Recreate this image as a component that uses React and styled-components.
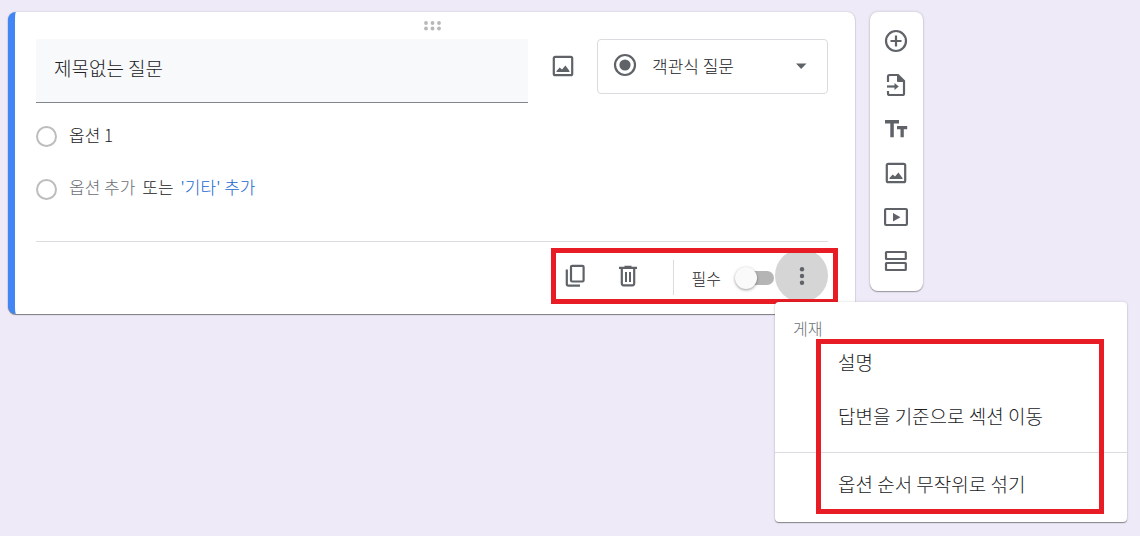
import React from 'react';
import styled, { createGlobalStyle } from 'styled-components';

const GlobalStyle = createGlobalStyle`
  * {
    box-sizing: border-box;
  }

  body {
    margin: 0;
    background: #eeeaf7;
    color: #202124;
    font-family: 'Noto Sans CJK KR', sans-serif;
    font-size: 16px;
    font-weight: 300;
  }

  button, input, select {
    font: inherit;
    color: inherit;
  }
`;

const Page = styled.main`
  display: flex;
  align-items: flex-start;
  gap: 15px;
  min-height: 100vh;
  padding: 12px 217px 12px 8px;
`;

const Card = styled.section`
  flex: 1;
  min-width: 0;
  padding: 0 27px 12px 21px;
  background: #fff;
  border-left: 7px solid #4285f4;
  border-radius: 8px;
  box-shadow: 0 1px 1px rgba(0, 0, 0, 0.45), 0 0 2px rgba(0, 0, 0, 0.2);
`;

const IconButton = styled.button`
  display: flex;
  align-items: center;
  justify-content: center;
  width: ${({ $width }) => $width || 53}px;
  height: ${({ $height }) => $height || 53}px;
  padding: 0;
  border: 0;
  border-radius: 50%;
  background: ${({ $active }) => ($active ? '#d5d5d5' : 'transparent')};
  color: #5f6368;
  cursor: pointer;
`;

const DragHandle = styled(IconButton)`
  margin: 0 auto;
  border-radius: 0;
  color: #b8b8b8;
  cursor: move;
`;

const QuestionRow = styled.div`
  display: flex;
  align-items: flex-start;
  gap: 8px;
`;

const TitleInput = styled.input`
  flex: 1;
  min-width: 0;
  height: 64px;
  padding: 0 18px 6px;
  border: 0;
  border-bottom: 1px solid #80868b;
  background: #f8f9fa;
  font-size: 19px;
  outline: none;
`;

const TypeField = styled.label`
  display: flex;
  align-items: center;
  width: 231px;
  height: 55px;
  padding: 0 14px 3px 15px;
  border: 1px solid #dadce0;
  border-radius: 4px;
  color: #5f6368;
`;

const TypeSelect = styled.select`
  flex: 1;
  min-width: 0;
  height: 50px;
  padding: 0 0 0 15px;
  border: 0;
  appearance: none;
  background: transparent;
  color: #202124;
  font-size: 17px;
  outline: none;
`;

const Options = styled.div`
  padding: 7px 0 25px;
  border-bottom: 1px solid #dadce0;
`;

const OptionRow = styled.div`
  display: flex;
  align-items: center;
  height: 53px;
  gap: 7px;
  font-size: 17px;
`;

const Radio = styled.input`
  appearance: none;
  width: 21px;
  height: 21px;
  margin: 0 5px 0 0;
  border: 2px solid #bdbdbd;
  border-radius: 50%;
`;

const OptionInput = styled.input`
  flex: 1;
  padding: 0 0 4px;
  border: 0;
  background: transparent;
  outline: none;
`;

const OptionText = styled.span`
  padding: 0 0 6px;
`;

const TextButton = styled.button`
  padding: 0 0 6px;
  border: 0;
  background: transparent;
  color: ${({ $color }) => $color};
  cursor: pointer;
`;

const Footer = styled.div`
  display: flex;
  justify-content: flex-end;
  padding-top: 7px;
`;

const Actions = styled.div`
  position: relative;
  display: flex;
  align-items: center;
`;

const Divider = styled.span`
  width: 1px;
  height: 35px;
  margin: 4px 18px 0;
  background: #dadce0;
`;

const SwitchLabel = styled.label`
  display: flex;
  align-items: center;
  gap: 14px;
  padding-top: 4px;
  margin-right: 1px;
`;

const Switch = styled.input`
  appearance: none;
  display: flex;
  align-items: center;
  width: 39px;
  height: 14px;
  margin: 0;
  border-radius: 7px;
  background: linear-gradient(#b5b5b5, #b5b5b5) right / 28px 14px no-repeat;

  &::before {
    content: '';
    width: 22px;
    height: 22px;
    border-radius: 50%;
    background: #fafafa;
    box-shadow: 0 1px 3px rgba(0, 0, 0, 0.4);
  }
`;

const Toolbar = styled.aside`
  display: flex;
  flex-direction: column;
  width: 53px;
  padding: 7px 4px 8px;
  background: #fff;
  border-radius: 8px;
  box-shadow: 0 1px 1px rgba(0, 0, 0, 0.3), 0 0 3px rgba(0, 0, 0, 0.2);
`;

const Menu = styled.div`
  position: absolute;
  top: 302px;
  right: 13px;
  width: 352px;
  padding: 18px 0 10px;
  background: #fff;
  border-radius: 4px;
  box-shadow: 0 1px 1px rgba(0, 0, 0, 0.4), 0 0 3px rgba(0, 0, 0, 0.15);
`;

const MenuHeading = styled.div`
  padding-left: 18px;
  color: #6b7075;
  line-height: 16px;
`;

const MenuItem = styled.button`
  display: block;
  width: 100%;
  height: 54px;
  padding: 0 0 4px 63px;
  border: 0;
  background: transparent;
  font-size: 19px;
  text-align: left;
  cursor: pointer;
`;

const MenuSeparator = styled.hr`
  height: 1px;
  margin: 8px 0 5px;
  border: 0;
  background: #dadce0;
`;

const Highlight = styled.div`
  position: absolute;
  inset: ${({ $inset }) => $inset};
  border: 5px solid #e81c24;
  pointer-events: none;
`;

const Svg = ({ size = 24, children }) => (
  <svg
    width={size}
    height={size}
    viewBox={`0 0 ${size} ${size}`}
    fill="none"
    stroke="currentColor"
    strokeWidth="2.2"
    aria-hidden="true"
  >
    {children}
  </svg>
);

const DragIcon = () => (
  <Svg>
    <g fill="currentColor" stroke="none">
      {[6, 12.5, 19].map((x) => (
        <React.Fragment key={x}>
          <circle cx={x} cy="9" r="1.9" />
          <circle cx={x} cy="14.5" r="1.9" />
        </React.Fragment>
      ))}
    </g>
  </Svg>
);

const ImageIcon = () => (
  <Svg>
    <rect x="2.8" y="2.8" width="18.4" height="18.4" rx="1.5" />
    <path d="M5.5 18v-1l3.2-3.6 2.3 2.2 3.4-4 4.1 5.4v1z" fill="currentColor" stroke="none" />
  </Svg>
);

const RadioIcon = () => (
  <Svg>
    <circle cx="12" cy="12" r="10" />
    <circle cx="12" cy="12" r="5.6" fill="currentColor" stroke="none" />
  </Svg>
);

const CaretIcon = () => (
  <Svg>
    <path d="M7 10.5h10.5L12.2 16z" fill="currentColor" stroke="none" />
  </Svg>
);

const CopyIcon = () => (
  <Svg>
    <rect x="8" y="1.8" width="12.6" height="15.7" rx="1.2" />
    <path d="M3.8 5.5V20q0 1.6 1.6 1.6H17" />
  </Svg>
);

const TrashIcon = () => (
  <Svg>
    <path d="M3 3.8h18M8.5 2.8h7M5.8 4v15.3q0 2 1.7 2h9q1.7 0 1.7-2V4" />
    <path d="M10 8v10M14 8v10" strokeWidth="2" />
  </Svg>
);

const MoreIcon = () => (
  <Svg>
    <g fill="currentColor" stroke="none">
      <circle cx="12" cy="5.3" r="2.2" />
      <circle cx="12" cy="12" r="2.2" />
      <circle cx="12" cy="18.7" r="2.2" />
    </g>
  </Svg>
);

const AddIcon = () => (
  <Svg>
    <circle cx="12" cy="12" r="10" />
    <path d="M12 6.5v11M6.5 12h11" />
  </Svg>
);

const ImportIcon = () => (
  <Svg>
    <path d="M4 9V3.5Q4 2 5.5 2H14l6 6v12.5q0 1.5-1.5 1.5h-13Q4 22 4 20.5V18" />
    <path d="M13.5 2v6.5H20L13.5 2z" fill="currentColor" strokeWidth="1" />
    <path d="M3 13.5h8" />
    <path d="M10.5 10l4.3 3.5-4.3 3.5z" fill="currentColor" stroke="none" />
  </Svg>
);

const TextIcon = () => (
  <Svg>
    <path
      d="M1 3v3.5h5.3v13.8h3.5V6.5H15V3zM13 9v3.2h3.5v8.1h3.3v-8.1H23.2V9z"
      fill="currentColor"
      stroke="none"
    />
  </Svg>
);

const VideoIcon = () => (
  <Svg>
    <rect x="1.1" y="4" width="21.8" height="16" rx="1" />
    <path d="M9 8v8.5l7.5-4.2z" fill="currentColor" stroke="none" />
  </Svg>
);

const SectionIcon = () => (
  <Svg>
    <rect x="2" y="3" width="19.8" height="7" rx="0.5" />
    <rect x="2" y="14" width="19.8" height="7" rx="0.5" />
  </Svg>
);

const tools = [
  { name: '질문 추가', Icon: AddIcon },
  { name: '질문 가져오기', Icon: ImportIcon },
  { name: '제목 및 설명 추가', Icon: TextIcon },
  { name: '이미지 추가', Icon: ImageIcon },
  { name: '동영상 추가', Icon: VideoIcon },
  { name: '섹션 추가', Icon: SectionIcon },
];

const App = () => {
  return (
    <>
      <GlobalStyle />
      <Page>
        <Card>
          <DragHandle $width={24} $height={27} aria-label="이동">
            <DragIcon />
          </DragHandle>
          <QuestionRow>
            <TitleInput aria-label="질문" defaultValue="제목없는 질문" />
            <IconButton aria-label="이미지 추가">
              <ImageIcon />
            </IconButton>
            <TypeField>
              <RadioIcon />
              <TypeSelect aria-label="질문 유형">
                <option>객관식 질문</option>
              </TypeSelect>
              <CaretIcon />
            </TypeField>
          </QuestionRow>
          <Options>
            <OptionRow>
              <Radio type="radio" disabled aria-label="옵션 1" />
              <OptionInput aria-label="옵션 값" defaultValue="옵션 1" />
            </OptionRow>
            <OptionRow>
              <Radio type="radio" disabled aria-label="옵션 추가" />
              <TextButton $color="#6b7075">옵션 추가</TextButton>
              <OptionText>또는</OptionText>
              <TextButton $color="#1967d2">'기타' 추가</TextButton>
            </OptionRow>
          </Options>
          <Footer>
            <Actions>
              <IconButton aria-label="복사">
                <CopyIcon />
              </IconButton>
              <IconButton aria-label="삭제">
                <TrashIcon />
              </IconButton>
              <Divider />
              <SwitchLabel>
                필수
                <Switch type="checkbox" role="switch" />
              </SwitchLabel>
              <IconButton $active aria-label="옵션 더보기">
                <MoreIcon />
              </IconButton>
              <Highlight $inset="-1px -10px -2px 2px" />
            </Actions>
          </Footer>
        </Card>
        <Toolbar>
          {tools.map(({ name, Icon }) => (
            <IconButton key={name} $width={44} $height={44} aria-label={name}>
              <Icon />
            </IconButton>
          ))}
        </Toolbar>
      </Page>
      <Menu>
        <MenuHeading>게재</MenuHeading>
        <MenuItem>설명</MenuItem>
        <MenuItem>답변을 기준으로 섹션 이동</MenuItem>
        <MenuSeparator />
        <MenuItem>옵션 순서 무작위로 섞기</MenuItem>
        <Highlight $inset="37px 23px 8px 41px" />
      </Menu>
    </>
  );
};

export default App;
